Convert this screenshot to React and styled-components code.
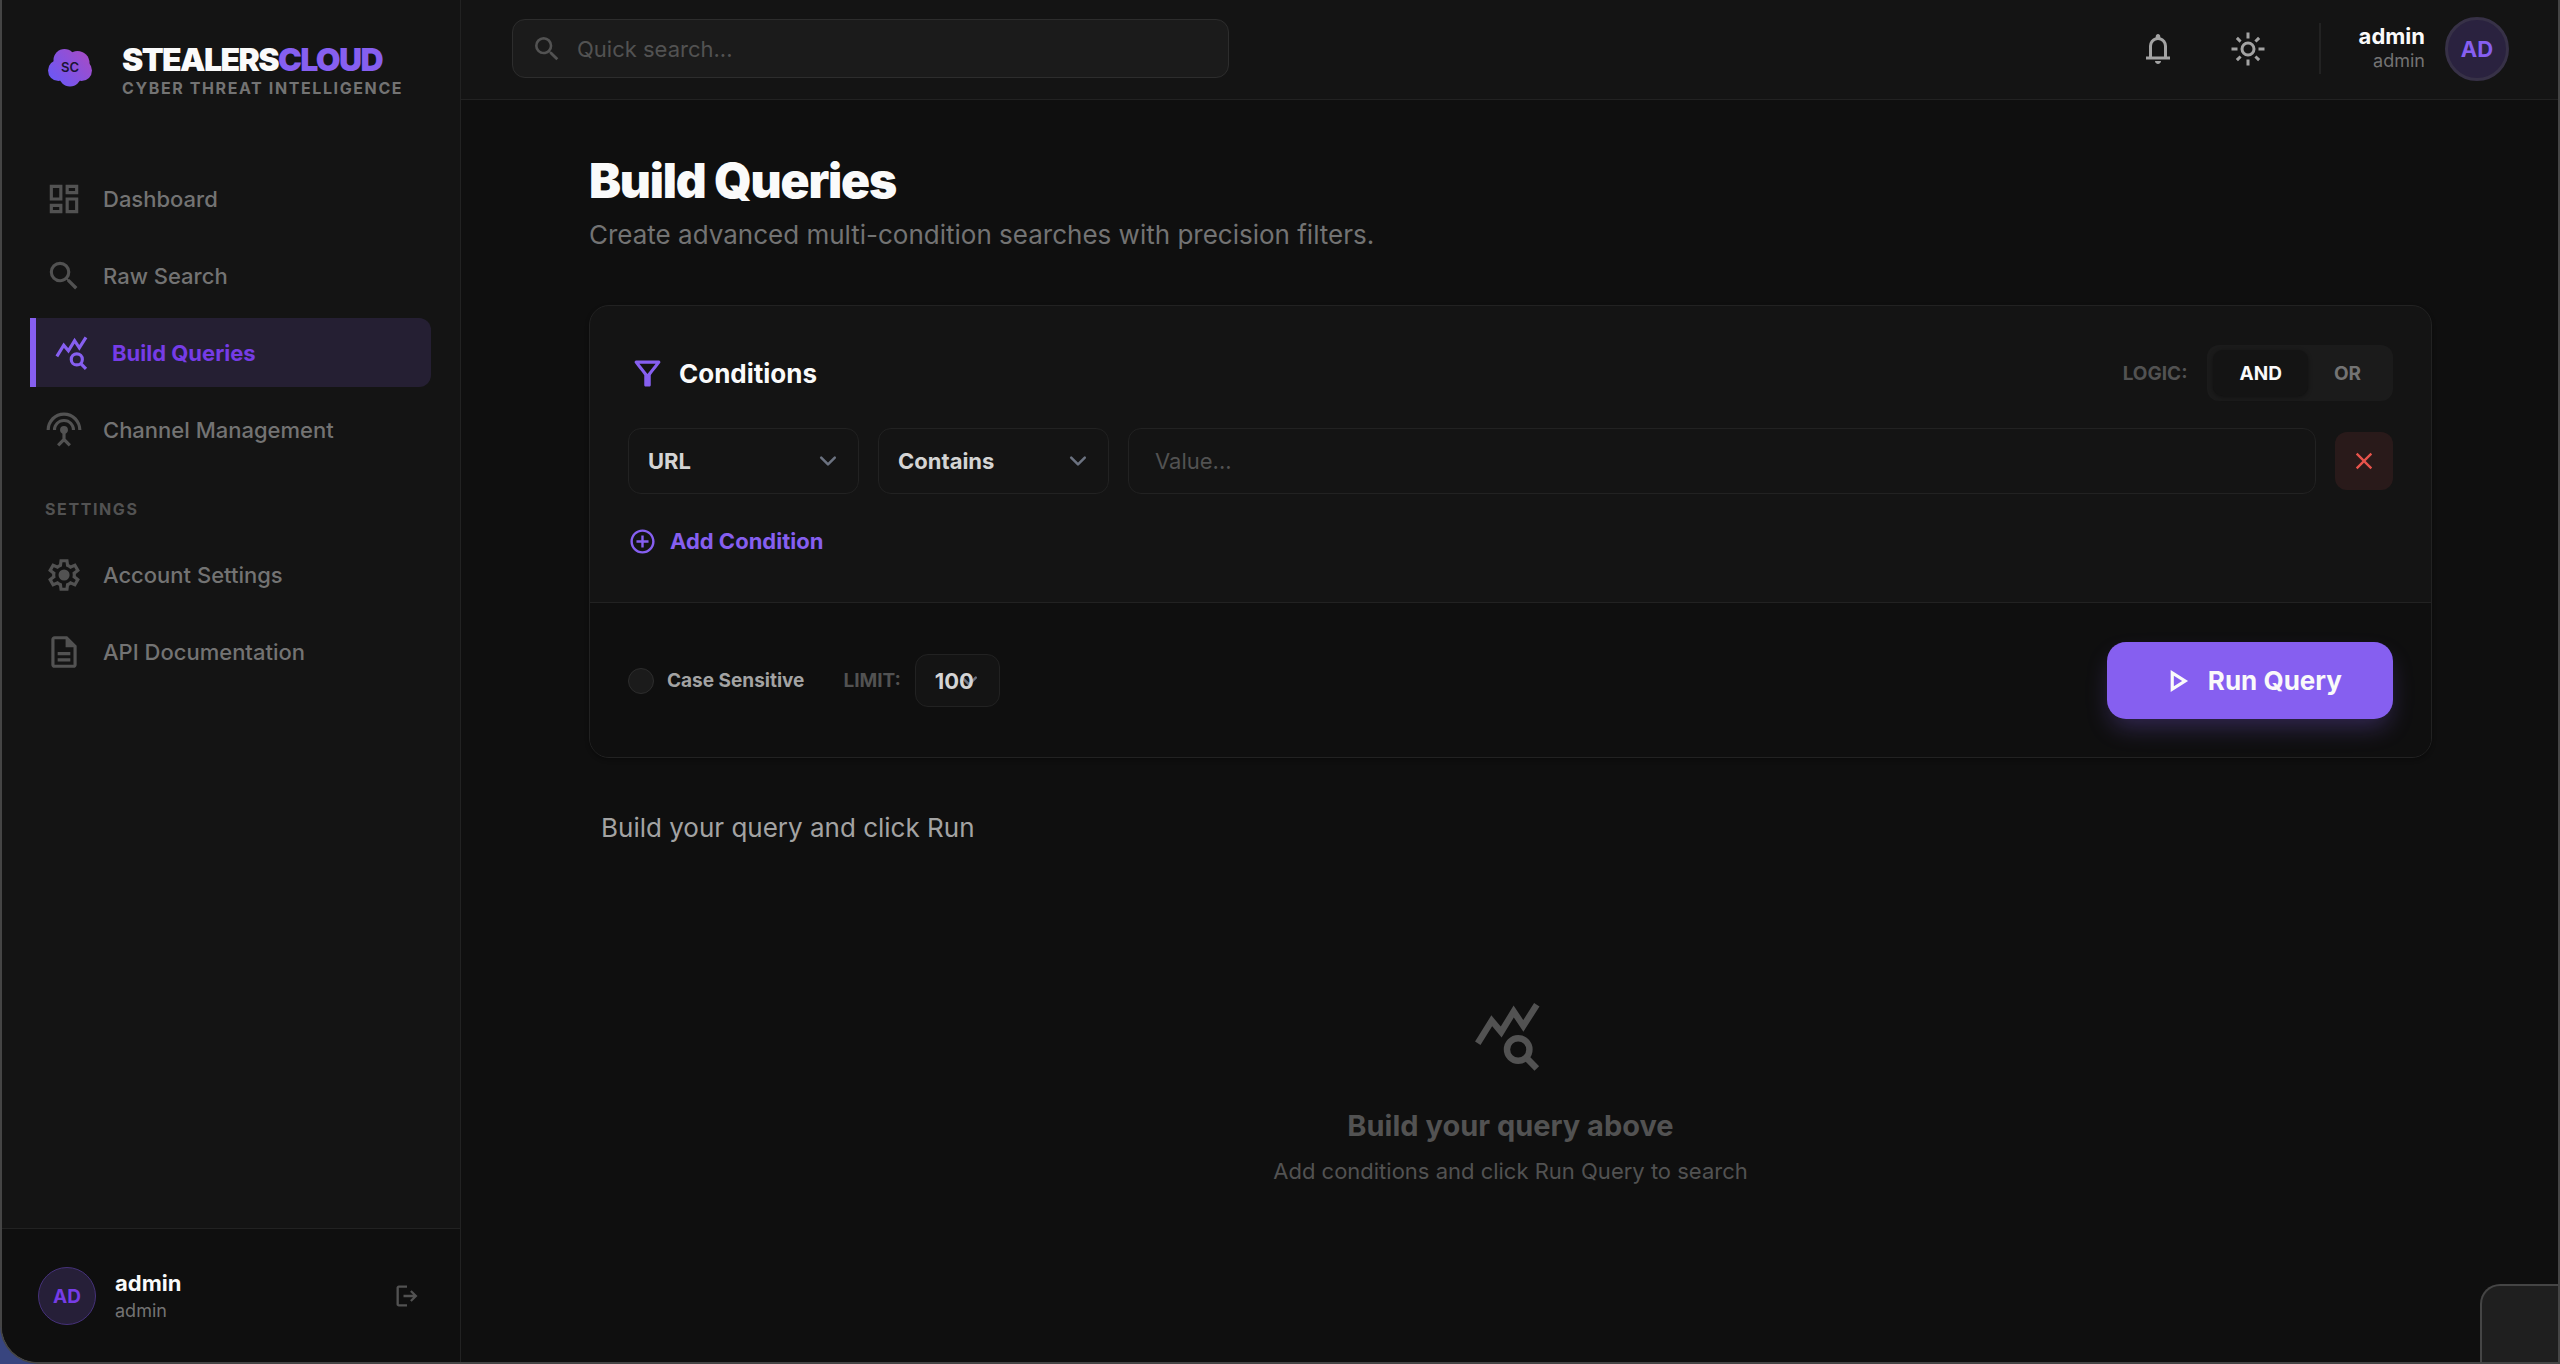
import React, { useState } from "react";
import styled, { createGlobalStyle } from "styled-components";
import {
    MdAddCircleOutline,
    MdClose,
    MdOutlineDashboard,
    MdOutlineDescription,
    MdOutlineFilterAlt,
    MdOutlinePlayArrow,
    MdSearch,
    MdSettingsInputAntenna,
} from "react-icons/md";

const themeVars = {
    page: "#0f0f0f",
    panel: "#141414",
    raised: "#1b1b1b",
    line: "#222222",
    lineStrong: "#2d2d2d",
    frame: "#454545",
    accent: "#865ff0",
    accentDeep: "#763ce6",
    accentSoft: "#251f33",
    white: "#fafafa",
    text: "#d4d4d4",
    soft: "#a3a3a3",
    muted: "#737373",
    faint: "#525252",
};

const chevron =
    "data:image/svg+xml,%3Csvg xmlns='http://www.w3.org/2000/svg' viewBox='0 0 20 20' fill='none'%3E%3Cpath stroke='%236b7280' stroke-linecap='round' stroke-linejoin='round' stroke-width='1.5' d='M6 8l4 4 4-4'/%3E%3C/svg%3E";

const QueryIcon = ({ size }) => (
    <svg
        width={size}
        height={size}
        viewBox="0 0 24 24"
        fill="none"
        stroke="currentColor"
        strokeWidth="2"
        aria-hidden="true"
    >
        <path d="M1.8 14.1 6.15 7.1 9.1 10.6 13 4.2 16 8.7 20.2 2.1" />
        <circle cx="14.4" cy="16.05" r="3.5" />
        <path d="M16.8 18.5 20.2 22" />
    </svg>
);

const SolidIcon = ({ size, d }) => (
    <svg
        width={size}
        height={size}
        viewBox="0 0 24 24"
        fill="currentColor"
        aria-hidden="true"
    >
        <path d={d} />
    </svg>
);

const bellPath =
    "M4 19v-2h2v-7q0-2.075 1.25-3.687T10.5 4.2v-.7q0-.625.438-1.062T12 2t1.063.438T13.5 3.5v.7q2 .5 3.25 2.113T18 10v7h2v2zm8 3q-.825 0-1.412-.587T10 20h4q0 .825-.587 1.413T12 22m-4-5h8v-7q0-1.65-1.175-2.825T12 6T9.175 7.175T8 10z";
const sunPath =
    "M12 15q1.25 0 2.125-.875T15 12t-.875-2.125T12 9t-2.125.875T9 12t.875 2.125T12 15m0 2q-2.075 0-3.537-1.463T7 12t1.463-3.537T12 7t3.538 1.463T17 12t-1.463 3.538T12 17M5 13H1v-2h4zm18 0h-4v-2h4zM11 5V1h2v4zm0 18v-4h2v4zM6.4 7.75L3.875 5.325L5.3 3.85l2.4 2.5zm12.3 12.4l-2.425-2.525L17.6 16.25l2.525 2.425zM16.25 6.4l2.425-2.525L20.15 5.3l-2.5 2.4zM3.85 18.7l2.525-2.425L7.75 17.6l-2.425 2.525z";
const gearPath =
    "m9.25 22l-.4-3.2q-.325-.125-.612-.3t-.563-.375L4.7 19.375l-2.75-4.75l2.575-1.95Q4.5 12.5 4.5 12.338v-.675q0-.163.025-.338L1.95 9.375l2.75-4.75l2.975 1.25q.275-.2.575-.375t.6-.3l.4-3.2h5.5l.4 3.2q.325.125.613.3t.562.375l2.975-1.25l2.75 4.75l-2.575 1.95q.025.175.025.338v.674q0 .163-.05.338l2.575 1.95l-2.75 4.75l-2.95-1.25q-.275.2-.575.375t-.6.3l-.4 3.2zM11 20h1.975l.35-2.65q.775-.2 1.438-.587t1.212-.938l2.475 1.025l.975-1.7l-2.15-1.625q.125-.35.175-.737T17.5 12t-.05-.787t-.175-.738l2.15-1.625l-.975-1.7l-2.475 1.05q-.55-.575-1.212-.962t-1.438-.588L13 4h-1.975l-.35 2.65q-.775.2-1.437.588t-1.213.937L5.55 7.15l-.975 1.7l2.15 1.6q-.125.375-.175.75t-.05.8q0 .4.05.775t.175.75l-2.15 1.625l.975 1.7l2.475-1.05q.55.575 1.213.963t1.437.587zm1.05-4.5q1.45 0 2.475-1.025T15.55 12t-1.025-2.475T12.05 8.5q-1.475 0-2.488 1.025T8.55 12t1.013 2.475T12.05 15.5";
const logoutPath =
    "M5 21q-.825 0-1.412-.587T3 19V5q0-.825.588-1.412T5 3h7v2H5v14h7v2zm11-4l-1.375-1.45l2.55-2.55H9v-2h8.175l-2.55-2.55L16 7l5 5z";

const Logo = () => (
    <LogoSvg viewBox="0 0 44 38" aria-hidden="true">
        <defs>
            <linearGradient
                id="cloud"
                gradientUnits="userSpaceOnUse"
                x1="4"
                y1="34"
                x2="38"
                y2="4"
            >
                <stop offset="0" stopColor="#6a58f6" />
                <stop offset="1" stopColor="#a34cc8" />
            </linearGradient>
        </defs>
        <g fill="url(#cloud)">
            <circle cx="16.5" cy="11" r="11" />
            <circle cx="29.5" cy="14" r="12" />
            <circle cx="33.5" cy="21.5" r="10.5" />
            <circle cx="22" cy="26.5" r="11" />
            <circle cx="10.5" cy="21.5" r="10.5" />
        </g>
        <text
            x="22"
            y="23"
            textAnchor="middle"
            fontSize="13"
            fontWeight="600"
            fill="#1a1433"
        >
            SC
        </text>
    </LogoSvg>
);

const App = () => {
    const [logic, setLogic] = useState("AND");
    const [value, setValue] = useState("");

    const mainLinks = [
        { label: "Dashboard", icon: <MdOutlineDashboard size={38} /> },
        { label: "Raw Search", icon: <MdSearch size={38} /> },
        { label: "Build Queries", icon: <QueryIcon size={38} />, active: true },
        {
            label: "Channel Management",
            icon: <MdSettingsInputAntenna size={38} />,
        },
    ];
    const settingsLinks = [
        {
            label: "Account Settings",
            icon: <SolidIcon size={38} d={gearPath} />,
        },
        { label: "API Documentation", icon: <MdOutlineDescription size={38} /> },
    ];

    const renderLink = ({ label, icon, active }) => (
        <NavLink key={label} href="#" $active={active}>
            {icon}
            {label}
        </NavLink>
    );

    return (
        <>
            <GlobalStyle />
            <Window>
                <Sidebar>
                    <Brand>
                        <Logo />
                        <div>
                            <BrandName>
                                STEALERS<span>CLOUD</span>
                            </BrandName>
                            <Tagline>CYBER THREAT INTELLIGENCE</Tagline>
                        </div>
                    </Brand>
                    <Nav>
                        {mainLinks.map(renderLink)}
                        <NavLabel>SETTINGS</NavLabel>
                        {settingsLinks.map(renderLink)}
                    </Nav>
                    <SidebarUser>
                        <Avatar>AD</Avatar>
                        <SidebarNames>
                            <UserName>admin</UserName>
                            <UserRole>admin</UserRole>
                        </SidebarNames>
                        <LogoutButton aria-label="Log out">
                            <SolidIcon size={28} d={logoutPath} />
                        </LogoutButton>
                    </SidebarUser>
                </Sidebar>

                <Content>
                    <TopBar>
                        <SearchBox>
                            <MdSearch size={32} />
                            <SearchInput
                                type="search"
                                aria-label="Quick search"
                                placeholder="Quick search..."
                            />
                        </SearchBox>
                        <TopActions>
                            <IconButton aria-label="Notifications">
                                <SolidIcon size={36} d={bellPath} />
                            </IconButton>
                            <IconButton aria-label="Toggle theme">
                                <SolidIcon size={36} d={sunPath} />
                            </IconButton>
                        </TopActions>
                        <TopUser>
                            <TopNames>
                                <UserName>admin</UserName>
                                <UserRole>admin</UserRole>
                            </TopNames>
                            <Avatar $large>AD</Avatar>
                        </TopUser>
                    </TopBar>

                    <Page>
                        <Title>Build Queries</Title>
                        <Subtitle>
                            Create advanced multi-condition searches with
                            precision filters.
                        </Subtitle>

                        <Card>
                            <CardBody>
                                <CardHeader>
                                    <CardTitle>
                                        <MdOutlineFilterAlt size={39} />
                                        Conditions
                                    </CardTitle>
                                    <Logic role="group" aria-label="Logic">
                                        <SmallLabel as="span">
                                            LOGIC:
                                        </SmallLabel>
                                        <Toggle>
                                            {["AND", "OR"].map((name) => (
                                                <ToggleButton
                                                    key={name}
                                                    $on={logic === name}
                                                    aria-pressed={
                                                        logic === name
                                                    }
                                                    onClick={() =>
                                                        setLogic(name)
                                                    }
                                                >
                                                    {name}
                                                </ToggleButton>
                                            ))}
                                        </Toggle>
                                    </Logic>
                                </CardHeader>
                                <Condition>
                                    <Select aria-label="Field">
                                        <option>URL</option>
                                        <option>Username</option>
                                        <option>Password</option>
                                    </Select>
                                    <Select aria-label="Operator">
                                        <option>Contains</option>
                                        <option>Equals</option>
                                    </Select>
                                    <ValueInput
                                        aria-label="Value"
                                        placeholder="Value..."
                                        value={value}
                                        onChange={(e) =>
                                            setValue(e.target.value)
                                        }
                                    />
                                    <RemoveButton aria-label="Remove condition">
                                        <MdClose size={28} />
                                    </RemoveButton>
                                </Condition>
                                <AddButton>
                                    <MdAddCircleOutline size={29} />
                                    Add Condition
                                </AddButton>
                            </CardBody>
                            <CardFooter>
                                <CheckLabel>
                                    <Checkbox type="checkbox" />
                                    Case Sensitive
                                </CheckLabel>
                                <Limit>
                                    <SmallLabel htmlFor="limit">
                                        LIMIT:
                                    </SmallLabel>
                                    <LimitSelect id="limit">
                                        <option>100</option>
                                        <option>500</option>
                                    </LimitSelect>
                                </Limit>
                                <RunButton>
                                    <MdOutlinePlayArrow size={38} />
                                    Run Query
                                </RunButton>
                            </CardFooter>
                        </Card>

                        <Status>Build your query and click Run</Status>
                        <Empty>
                            <QueryIcon size={77} />
                            <EmptyTitle>Build your query above</EmptyTitle>
                            <EmptyText>
                                Add conditions and click Run Query to search
                            </EmptyText>
                        </Empty>
                    </Page>
                </Content>
                <CornerPanel />
            </Window>
        </>
    );
};

export default App;

const GlobalStyle = createGlobalStyle`
    * {
        box-sizing: border-box;
    }
    body {
        margin: 0;
        background: #38457f;
        color: ${themeVars.white};
        font-family: Inter, "Liberation Sans", sans-serif;
        font-size: 22px;
    }
    h1, h2, h3, p {
        margin: 0;
    }
    button, input, select {
        font: inherit;
        color: inherit;
    }
    button {
        padding: 0;
        border: none;
        background: none;
        cursor: pointer;
    }
    svg {
        flex-shrink: 0;
    }
`;

const Window = styled.div`
    position: relative;
    display: flex;
    min-height: 100vh;
    border: 2px solid ${themeVars.frame};
    border-top: none;
    border-bottom-left-radius: 38px;
    overflow: hidden;
    background: ${themeVars.page};
`;

//Sidebar
const Sidebar = styled.aside`
    display: flex;
    flex-direction: column;
    flex: 0 0 459px;
    background: ${themeVars.panel};
    border-right: 1px solid ${themeVars.line};
`;

const Brand = styled.div`
    display: flex;
    align-items: flex-start;
    gap: 30px;
    padding: 44px 20px 68px 46px;
`;

const LogoSvg = styled.svg`
    width: 44px;
    height: 38px;
    margin-top: 5px;
`;

const BrandName = styled.div`
    font-size: 32px;
    line-height: 32px;
    font-weight: 900;
    letter-spacing: -0.05em;

    span {
        color: ${themeVars.accent};
    }
`;

const Tagline = styled.div`
    margin-top: 4px;
    color: ${themeVars.muted};
    font-size: 16px;
    line-height: 16px;
    font-weight: 700;
    letter-spacing: 0.1em;
    white-space: nowrap;
`;

const Nav = styled.nav`
    display: flex;
    flex-direction: column;
    flex: 1;
    gap: 8px;
    padding: 0 29px 0 28px;
`;

const NavLink = styled.a`
    display: flex;
    align-items: center;
    gap: 20px;
    height: 69px;
    padding: 0 15px;
    color: ${themeVars.muted};
    font-weight: 500;
    text-decoration: none;

    svg {
        color: ${themeVars.faint};
    }

    ${({ $active }) =>
        $active &&
        `
        padding-left: 18px;
        border-left: 6px solid ${themeVars.accent};
        border-radius: 0 12px 12px 0;
        background: ${themeVars.accentSoft};
        color: ${themeVars.accentDeep};
        font-weight: 700;

        svg {
            color: ${themeVars.accent};
        }
    `}
`;

const NavLabel = styled.div`
    margin: 27px 0 13px;
    padding-left: 15px;
    color: ${themeVars.faint};
    font-size: 16px;
    line-height: 20px;
    font-weight: 700;
    letter-spacing: 0.1em;
`;

const SidebarUser = styled.div`
    display: flex;
    align-items: center;
    gap: 19px;
    padding: 38px 39px 37px 36px;
    border-top: 1px solid ${themeVars.line};
    background: ${themeVars.page};
`;

const Avatar = styled.div`
    display: flex;
    align-items: center;
    justify-content: center;
    width: ${({ $large }) => ($large ? "64px" : "58px")};
    height: ${({ $large }) => ($large ? "64px" : "58px")};
    border: ${({ $large }) =>
        $large ? "3px solid #373147" : "1px solid #46327a"};
    border-radius: 50%;
    background: ${({ $large }) => ($large ? "#2a223f" : "#261f38")};
    color: ${({ $large }) =>
        $large ? themeVars.accent : themeVars.accentDeep};
    font-size: ${({ $large }) => ($large ? "22px" : "19px")};
    font-weight: 700;
`;

const UserName = styled.div`
    font-weight: 700;
`;

const UserRole = styled.div`
    color: ${themeVars.muted};
    font-size: 18px;
`;

const SidebarNames = styled.div`
    flex: 1;

    ${UserName} {
        line-height: 30px;
    }
    ${UserRole} {
        line-height: 26px;
    }
`;

const LogoutButton = styled.button`
    display: flex;
    color: ${themeVars.faint};
`;

//Top bar
const Content = styled.div`
    display: flex;
    flex-direction: column;
    flex: 1;
    min-width: 0;
`;

const TopBar = styled.header`
    display: flex;
    align-items: center;
    height: 100px;
    padding: 0 49px 2px 51px;
    border-bottom: 1px solid ${themeVars.line};
    background: ${themeVars.panel};
`;

const SearchBox = styled.label`
    display: flex;
    align-items: center;
    gap: 14px;
    width: 717px;
    height: 59px;
    margin-right: auto;
    padding: 0 18px;
    border: 1px solid ${themeVars.lineStrong};
    border-radius: 13px;
    background: ${themeVars.raised};
    color: ${themeVars.faint};
`;

const SearchInput = styled.input`
    flex: 1;
    min-width: 0;
    padding: 0;
    border: none;
    outline: none;
    background: none;
    color: ${themeVars.text};

    &::placeholder {
        color: ${themeVars.faint};
        opacity: 1;
    }
`;

const TopActions = styled.div`
    display: flex;
    gap: 26px;
    margin-right: 39px;
`;

const IconButton = styled.button`
    display: flex;
    align-items: center;
    justify-content: center;
    width: 64px;
    height: 64px;
    color: ${themeVars.soft};
`;

const TopUser = styled.div`
    display: flex;
    align-items: center;
    gap: 20px;
    height: 51px;
    padding-left: 38px;
    border-left: 2px solid ${themeVars.line};
`;

const TopNames = styled.div`
    text-align: right;

    ${UserName} {
        line-height: 24px;
    }
    ${UserRole} {
        line-height: 26px;
    }
`;

//Page
const Page = styled.main`
    flex: 1;
    padding: 53px 126px 0 128px;
`;

const Title = styled.h1`
    font-size: 48px;
    line-height: 56px;
    font-weight: 900;
    letter-spacing: -0.025em;
`;

const Subtitle = styled.p`
    margin-top: 8px;
    color: ${themeVars.muted};
    font-size: 26px;
    line-height: 36px;
    font-weight: 400;
`;

const Card = styled.section`
    margin-top: 52px;
    border: 1px solid ${themeVars.line};
    border-radius: 20px;
    background: ${themeVars.panel};
    box-shadow: 0 2px 4px rgba(0, 0, 0, 0.3);
    overflow: hidden;
`;

const CardBody = styled.div`
    padding: 39px 38px 46px;
`;

const CardHeader = styled.div`
    display: flex;
    align-items: center;
    justify-content: space-between;
`;

const CardTitle = styled.h2`
    display: flex;
    align-items: center;
    gap: 12px;
    font-size: 26px;
    font-weight: 700;

    svg {
        color: ${themeVars.accent};
    }
`;

const Logic = styled.div`
    display: flex;
    align-items: center;
    gap: 20px;
`;

const SmallLabel = styled.label`
    color: ${themeVars.faint};
    font-size: 19px;
    font-weight: 700;
`;

const Toggle = styled.div`
    display: flex;
    padding: 5px 6px;
    border-radius: 12px;
    background: ${themeVars.raised};
`;

const ToggleButton = styled.button`
    height: 46px;
    padding: 0 26px;
    border-radius: 10px;
    font-size: 19px;
    font-weight: 700;
    color: ${({ $on }) => ($on ? themeVars.white : themeVars.muted)};
    background: ${({ $on }) => ($on ? themeVars.panel : "none")};
    box-shadow: ${({ $on }) => ($on ? "0 1px 4px rgba(0, 0, 0, 0.4)" : "none")};
`;

const Condition = styled.div`
    display: flex;
    align-items: center;
    gap: 19px;
    margin-top: 27px;
`;

const Select = styled.select`
    appearance: none;
    width: 231px;
    height: 66px;
    padding: 0 19px;
    border: 1px solid ${themeVars.line};
    border-radius: 13px;
    background: ${themeVars.panel} url("${chevron}") no-repeat right 13px center /
        34px 34px;
    color: ${themeVars.text};
    font-weight: 700;
`;

const LimitSelect = styled(Select)`
    width: 85px;
    height: 53px;
    padding: 0 0 0 19px;
`;

const ValueInput = styled.input`
    flex: 1;
    min-width: 0;
    height: 66px;
    padding: 0 26px;
    border: 1px solid ${themeVars.line};
    border-radius: 13px;
    outline: none;
    background: ${themeVars.panel};
    color: ${themeVars.text};

    &::placeholder {
        color: ${themeVars.faint};
        opacity: 1;
    }
`;

const RemoveButton = styled.button`
    display: flex;
    align-items: center;
    justify-content: center;
    width: 58px;
    height: 58px;
    border-radius: 12px;
    background: #291a1a;
    color: #e5534b;
`;

const AddButton = styled.button`
    display: flex;
    align-items: center;
    gap: 13px;
    height: 30px;
    margin-top: 32px;
    color: ${themeVars.accent};
    font-weight: 700;
`;

const CardFooter = styled.div`
    display: flex;
    align-items: center;
    gap: 39px;
    padding: 39px 38px 38px;
    border-top: 1px solid ${themeVars.line};
    background: ${themeVars.page};
`;

const CheckLabel = styled.label`
    display: flex;
    align-items: center;
    gap: 13px;
    color: ${themeVars.soft};
    font-size: 19px;
    font-weight: 700;
`;

const Checkbox = styled.input`
    appearance: none;
    width: 26px;
    height: 26px;
    margin: 0;
    border: 1px solid ${themeVars.lineStrong};
    border-radius: 50%;
    background: ${themeVars.raised};

    &:checked {
        background: ${themeVars.accent};
    }
`;

const Limit = styled.div`
    display: flex;
    align-items: center;
    gap: 14px;
`;

const RunButton = styled.button`
    display: flex;
    align-items: center;
    gap: 12px;
    height: 77px;
    margin-left: auto;
    padding: 0 51px;
    border-radius: 19px;
    background: ${themeVars.accent};
    box-shadow: 0 12px 24px -4px rgba(134, 95, 240, 0.3);
    font-size: 26px;
    font-weight: 700;
`;

const Status = styled.p`
    margin-top: 52px;
    padding-left: 12px;
    color: ${themeVars.soft};
    font-size: 26px;
    line-height: 36px;
    font-weight: 400;
`;

const Empty = styled.div`
    display: flex;
    flex-direction: column;
    align-items: center;
    padding: 152px 0 40px;
    color: ${themeVars.faint};
`;

const EmptyTitle = styled.h3`
    margin-top: 31px;
    font-size: 29px;
    line-height: 40px;
    font-weight: 700;
`;

const EmptyText = styled.p`
    margin-top: 9px;
    line-height: 32px;
`;

const CornerPanel = styled.div`
    position: absolute;
    right: 0;
    bottom: 0;
    width: 78px;
    height: 78px;
    border: 2px solid ${themeVars.frame};
    border-width: 2px 0 0 2px;
    border-top-left-radius: 20px;
    background: #1f1f1f;
`;
